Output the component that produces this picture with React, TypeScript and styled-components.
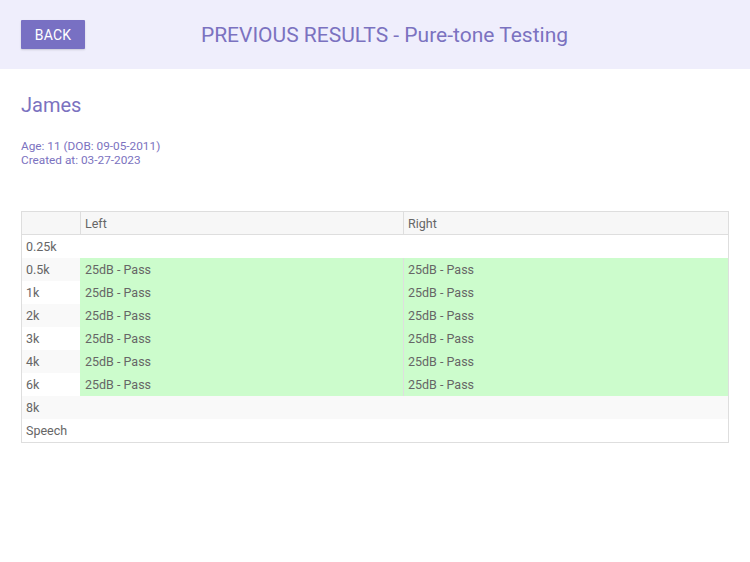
import styled, { createGlobalStyle } from "styled-components";

const GlobalStyle = createGlobalStyle`
    html, body {
        margin: 0;
        padding: 0;
        background: #ffffff;
        font-family: Roboto, "Liberation Sans", Arial, sans-serif;
    }
`

interface Row {
    freq: string,
    left?: string,
    right?: string,
}

const rows: Row[] = [
    { freq: '0.25k' },
    { freq: '0.5k', left: '25dB - Pass', right: '25dB - Pass' },
    { freq: '1k', left: '25dB - Pass', right: '25dB - Pass' },
    { freq: '2k', left: '25dB - Pass', right: '25dB - Pass' },
    { freq: '3k', left: '25dB - Pass', right: '25dB - Pass' },
    { freq: '4k', left: '25dB - Pass', right: '25dB - Pass' },
    { freq: '6k', left: '25dB - Pass', right: '25dB - Pass' },
    { freq: '8k' },
    { freq: 'Speech' },
]

const Page = styled.div`
    width: 750px;
    min-height: 562px;
`

const Header = styled.header`
    height: 69px;
    background: #efeefc;
    display: flex;
    align-items: center;
    padding: 0 21px;
    box-sizing: border-box;
`

const BackBtn = styled.button`
    width: 64px;
    height: 29px;
    border: none;
    border-radius: 1px;
    background: #7870c3;
    color: #ffffff;
    font-family: inherit;
    font-size: 14px;
    letter-spacing: 0.2px;
    box-shadow: 0 1px 2px rgba(0, 0, 0, 0.15);
`

const HeaderTitle = styled.h1`
    flex: 1;
    margin: 0 45px 0 0;
    text-align: center;
    font-size: 21px;
    font-weight: 400;
    color: #7b72c0;
`

const Content = styled.main`
    padding: 24px 21px 0;
`

const Name = styled.h2`
    margin: 0;
    font-size: 20px;
    font-weight: 400;
    color: #7b72c0;
    line-height: 24px;
`

const Info = styled.div`
    margin-top: 22px;
    font-size: 11.8px;
    line-height: 14px;
    color: #7b72c0;
`

const Table = styled.div`
    margin-top: 44px;
    width: 706px;
    border: 1px solid #dedede;
    display: grid;
    grid-template-columns: 58px 323px 1fr;
`

const HeadCell = styled.div<{ $first?: boolean }>`
    height: 22px;
    line-height: 24px;
    padding-left: 4px;
    background: #f7f7f7;
    border-bottom: 1px solid #dedede;
    border-left: ${p => p.$first ? 'none' : '1px solid #dedede'};
    font-size: 12.5px;
    color: #666666;
`

const Cell = styled.div<{ $pass?: boolean, $stripe?: boolean }>`
    height: 23px;
    line-height: 23px;
    padding-left: 4px;
    font-size: 12.5px;
    color: #666666;
    background: ${p => p.$pass ? '#ccfccc' : p.$stripe ? '#f9f9f9' : '#ffffff'};
`

const ResultCell = styled(Cell)<{ $divider?: boolean }>`
    border-left: ${p => p.$divider ? '1px solid #dedede' : '1px solid transparent'};
`

const App = () => {
    return (
        <Page>
            <GlobalStyle />
            <Header>
                <BackBtn>BACK</BackBtn>
                <HeaderTitle>PREVIOUS RESULTS - Pure-tone Testing</HeaderTitle>
            </Header>
            <Content>
                <Name>James</Name>
                <Info>
                    <div>Age: 11 (DOB: 09-05-2011)</div>
                    <div>Created at: 03-27-2023</div>
                </Info>
                <Table>
                    <HeadCell $first />
                    <HeadCell>Left</HeadCell>
                    <HeadCell>Right</HeadCell>
                    {rows.map((row, idx) => {
                        const stripe = idx % 2 === 1;
                        return [
                            <Cell key={`f${idx}`} $stripe={stripe}>{row.freq}</Cell>,
                            <ResultCell key={`l${idx}`} $stripe={stripe} $pass={!!row.left}>{row.left}</ResultCell>,
                            <ResultCell key={`r${idx}`} $stripe={stripe} $pass={!!row.right} $divider={!!row.right}>{row.right}</ResultCell>,
                        ];
                    })}
                </Table>
            </Content>
        </Page>
    )
}

export default App
